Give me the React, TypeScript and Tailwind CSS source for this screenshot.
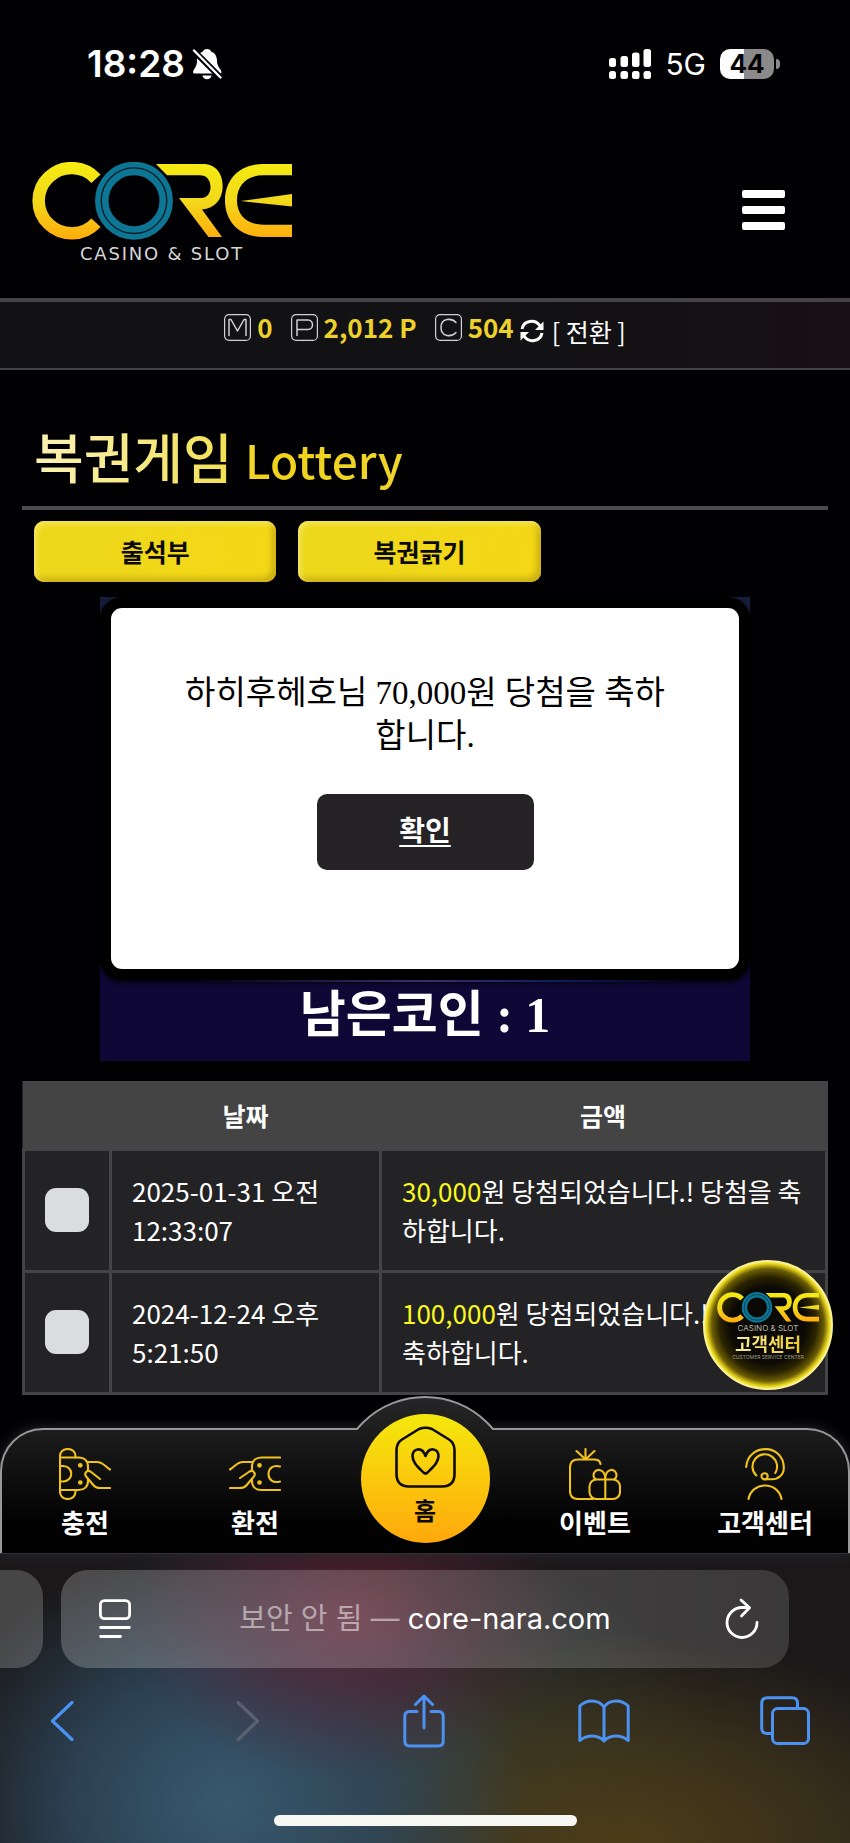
import React, { useState } from 'react';

interface LotteryRow {
  id: string;
  date: string;
  amount: string;
  message: string;
}

const rows: LotteryRow[] = [
  { id: '1', date: '2025-01-31 오전 12:33:07', amount: '30,000', message: '원 당첨되었습니다.! 당첨을 축하합니다.' },
  { id: '2', date: '2024-12-24 오후 5:21:50', amount: '100,000', message: '원 당첨되었습니다.! 당첨을 축하합니다.' },
];

const CoreLogo = ({ id, className }: { id: string; className: string }) => (
  <svg viewBox="0 0 260 78" className={className} aria-label="CORE" role="img">
    <defs>
      <linearGradient id={id} gradientUnits="userSpaceOnUse" x1="0" y1="0" x2="0" y2="78">
        <stop offset="0" stopColor="#f5ec12" />
        <stop offset="0.5" stopColor="#f2d81a" />
        <stop offset="1" stopColor="#ffab0c" />
      </linearGradient>
    </defs>
    <path d="M64 16.7 A33 32.6 0 1 0 64 60.7" fill="none" stroke={`url(#${id})`} strokeWidth="12.5" />
    <g fill={`url(#${id})`}>
      <path d="M124 2 H171 C184 2 190.7 12 190.7 24 C190.7 37 183 46.500 170 47.500 L190 75 H176.500 L147 36 H169 C175.500 36 178.500 31 178.500 25 C178.500 18 174.500 13.300 168 13.300 H135 Z" />
      <path d="M260 2 H231 C208 2 193 17 193 38.500 C193 60 208 75 231 75 H260 V62.700 H231 C215 62.700 205 53 205 38.500 C205 23 215 13.300 231 13.300 H260 Z" />
      <path d="M208.700 39 L260 32 V44.500 Z" />
    </g>
    <circle cx="102" cy="38.700" r="39.500" fill="none" stroke="#000" strokeWidth="3" />
    <circle cx="102" cy="38.700" r="32.200" fill="none" stroke="#0c7694" strokeWidth="13.500" />
    <circle cx="102" cy="38.700" r="32.800" fill="none" stroke="#001a22" strokeWidth="1.300" />
  </svg>
);

const StatusBar = () => (
  <div className="flex h-32 items-center justify-between pl-[87px] pr-[70px] font-['Inter',sans-serif]">
    <div className="flex items-center gap-[7px]">
      <span className="text-[37px] font-semibold leading-10">18:28</span>
      <svg viewBox="0 0 30 32" className="h-8 w-[30px]" fill="#fff">
        <path d="M15 1 C17.500 1 18.500 2 19 3.500 C23.500 5 25 9 25 13 C25 19 29 21 29.500 24 Q29.500 25.500 28 25.500 H2.500 Q1 25.500 1 24 C1.500 21 5 19 5 13 C5 9 6.500 5 11 3.500 C11.500 2 12.500 1 15 1 Z" />
        <path d="M10.500 27.500 H19.500 C19 32.500 11 32.500 10.500 27.500 Z" />
        <path d="M0 1 L30 31" stroke="#000" strokeWidth="6" />
        <path d="M2 2.500 L28.500 29.500" stroke="#fff" strokeWidth="2.400" strokeLinecap="round" />
      </svg>
    </div>
    <div className="flex items-center gap-[14px]">
      <svg viewBox="0 0 42 30" className="h-[30px] w-[42px]" fill="#fff">
        <rect x="0" y="9" width="7" height="9" rx="2.500" />
        <rect x="11.500" y="7" width="7.500" height="11" rx="2.500" />
        <rect x="23" y="3.500" width="7.500" height="14.500" rx="2.500" />
        <rect x="34.500" y="0" width="7.500" height="18" rx="2.500" />
        <rect x="0" y="22" width="7" height="8" rx="2.500" />
        <rect x="11.500" y="22" width="7.500" height="8" rx="2.500" />
        <rect x="23" y="22" width="7.500" height="8" rx="2.500" />
        <rect x="34.500" y="22" width="7.500" height="8" rx="2.500" />
      </svg>
      <span className="text-[30px] leading-9">5G</span>
      <div className="flex items-center gap-0.5">
        <div className="flex h-[30px] w-[54px] items-center justify-center rounded-[10px] bg-[linear-gradient(90deg,#fff_44%,#8a8a8a_44%)] text-[26px] font-bold leading-[30px] text-black">
          44
        </div>
        <div className="h-2.5 w-1 rounded-r-full bg-[#8a8a8a]" />
      </div>
    </div>
  </div>
);

const Badge = ({ children }: { children: React.ReactNode }) => (
  <svg viewBox="0 0 27 27" className="size-[27px]" fill="none" stroke="#d2d2d2" strokeLinecap="round" strokeLinejoin="round">
    <rect x="0.600" y="0.600" width="25.800" height="25.800" rx="4.500" strokeWidth="1.200" />
    {children}
  </svg>
);

const BalanceBar = () => (
  <div className="flex h-[72px] items-center justify-center border-b-2 border-t-4 border-[#434345] bg-[linear-gradient(90deg,#121214,#121113_65%,#171014)] pb-4 text-[26px] font-bold leading-9 text-[#ecd12a]">
    <Badge>
      <path d="M5 21.500 V5.500 H7 L13.500 17 L20 5.500 H22 V21.500" strokeWidth="1.500" />
    </Badge>
    <span className="ml-1.5">0</span>
    <span className="ml-[18px] flex items-center">
      <Badge>
        <path d="M6 21.500 V6 H17 C23 6 23 15.500 17 15.500 H6.500" strokeWidth="1.500" />
      </Badge>
    </span>
    <span className="ml-1.5">2,012 P</span>
    <span className="ml-[18px] flex items-center">
      <Badge>
        <path d="M21 8.500 C17 4 6 3.500 6 13.500 C6 23.500 17 23 21 18.500" strokeWidth="1.500" />
      </Badge>
    </span>
    <span className="ml-1.5">504</span>
    <button type="button" className="ml-1.5 flex items-center gap-2 pt-2 text-[25px] font-normal text-white">
      <svg viewBox="0 0 24 24" className="size-6" fill="none" stroke="#fff" strokeWidth="3">
        <path d="M2 10 C3.500 1.500 15 -0.500 20 7" />
        <path d="M22 14 C20.500 22.500 9 24.500 4 17" />
        <path d="M23.500 2.500 V11 H15 Z" fill="#fff" stroke="none" />
        <path d="M0.500 21.500 V13 H9 Z" fill="#fff" stroke="none" />
      </svg>
      [ 전환 ]
    </button>
  </div>
);

const yellowButton =
  'h-[61px] w-[31%] rounded-[10px] bg-[linear-gradient(100deg,#ecd81c,#f4d716)] pb-0.5 text-[25px] font-bold leading-9 text-[#0c0a04] shadow-[inset_3px_3px_5px_#f3e55c,inset_-4px_-4px_6px_#c9ae12]';

const WinDialog = () => (
  <div role="dialog" aria-label="당첨" className="rounded-[22px] bg-black p-[11px] shadow-[0_2px_5px_#000]">
    <div className="flex h-[361px] flex-col items-center rounded-[11px] bg-white pt-16 text-black">
      <p className="w-[500px] max-w-full break-all text-center font-['Liberation_Serif','Noto_Sans_CJK_KR',serif] text-[33px] leading-[43px]">
        하히후헤호님 70,000원 당첨을 축하합니다.
      </p>
      <button
        type="button"
        className="mt-9 h-[76px] w-[217px] rounded-[10px] bg-[#252326] pb-1.5 text-[28px] font-bold leading-9 text-white underline decoration-2 underline-offset-4"
      >
        확인
      </button>
    </div>
  </div>
);

const FloatingSupport = () => (
  <a
    href="#support"
    className="absolute -right-[5px] bottom-[5px] flex size-[130px] flex-col items-center rounded-full border-2 border-[#f9f09a] bg-[radial-gradient(circle,#0a0905_42%,#2a2300_54%,#6b5c05_63%,#e8d61c_69%,#f7ec4a_71%)] pt-[30px]"
  >
    <CoreLogo id="core-small" className="h-[31px] w-[102px]" />
    <span className="font-['Inter',sans-serif] text-[8px] leading-[10px] text-[#b9b6a8]">CASINO &amp; SLOT</span>
    <span className="bg-[linear-gradient(90deg,#f7ec9b,#f0cc2a)] bg-clip-text text-[18px] font-bold leading-5 text-transparent">고객센터</span>
    <span className="whitespace-nowrap font-['Inter',sans-serif] text-[5px] leading-2 text-[#a19d8d]">CUSTOMER SERVICE CENTER</span>
  </a>
);

const HistoryTable = () => {
  const [checked, setChecked] = useState<Record<string, boolean>>({});

  return (
    <div className="relative mt-5">
      <table className="w-full table-fixed border-collapse border-2 border-[#444446] bg-[#232225] text-[26px] leading-[39px]">
        <colgroup>
          <col className="w-[87px]" />
          <col className="w-[270px]" />
          <col />
        </colgroup>
        <thead>
          <tr className="h-[67px] bg-[#444444]">
            <th aria-label="선택" />
            <th className="font-bold text-[25px]">날짜</th>
            <th className="font-bold text-[25px]">금액</th>
          </tr>
        </thead>
        <tbody>
          {rows.map((row) => (
            <tr key={row.id} className="h-[122px]">
              <td className="border-[3px] border-[#444446]">
                <input
                  type="checkbox"
                  aria-label={row.date}
                  checked={!!checked[row.id]}
                  onChange={(e) => setChecked({ ...checked, [row.id]: e.target.checked })}
                  className="mx-auto block size-11 appearance-none rounded-[11px] bg-[#dadcdf] checked:bg-[#f0d817]"
                />
              </td>
              <td className="border-[3px] border-[#444446] px-5">{row.date}</td>
              <td className="break-all border-[3px] border-[#444446] px-5">
                <span className="text-[#f8f81c]">{row.amount}</span>
                {row.message}
              </td>
            </tr>
          ))}
        </tbody>
      </table>
      <FloatingSupport />
    </div>
  );
};

const NavItem = ({ label, children }: { label: string; children: React.ReactNode }) => (
  <a href="#nav" className="flex flex-col items-center pt-[52px] text-[26px] font-bold leading-[44px]">
    <svg viewBox="0 0 52 52" className="size-[52px]" fill="none" stroke="#f2c21c" strokeWidth="2.100" strokeLinecap="round" strokeLinejoin="round">
      {children}
    </svg>
    {label}
  </a>
);

const BottomNav = () => (
  <nav className="relative mt-px h-[157px]">
    {/* rounded panel with the raised arc behind the home button */}
    <div className="absolute inset-x-0 bottom-0 top-8 rounded-t-[43px] border-2 border-b-0 border-[#989898] bg-[linear-gradient(180deg,#1c1c1c,#020202_75%)] shadow-[0_0_14px_#2b2b30]" />
    <div className="absolute left-1/2 top-0 h-[34px] w-[140px] -translate-x-1/2 overflow-hidden">
      <div className="-ml-[19px] size-[178px] rounded-full border-2 border-[#989898] bg-[linear-gradient(180deg,#262628,#1c1c1c_34px)]" />
    </div>
    <div className="relative grid grid-cols-5">
      <NavItem label="충전">
        <path d="M16.500 9.500 V8.500 C16.500 4 13.500 1 8.700 1 C4 1 1 4 1 8.500 V43.500 C1 48 4 51 8.700 51 C13.500 51 16.500 48 16.500 43.500 V42" />
        <path d="M1 9.500 H19.500 C25.500 9.500 29 13 29 18.500 V23 M29 31 V33 C29 38.500 25.500 42 19.500 42 H1" />
        <path d="M1 18 H4 C15 18 15 33.500 4 33.500 H1" />
        <path d="M28 14 H38 C44 14 45.500 18 51 21.500" />
        <path d="M41 31 L31.500 23.500 C27.500 21.500 24.500 26 27.500 29 L33 35.500 C36 39.500 38 40 42 40 H51" />
        <circle cx="21.300" cy="17.300" r="1.300" fill="#f2c21c" />
        <circle cx="21.300" cy="34.500" r="1.300" fill="#f2c21c" />
      </NavItem>
      <NavItem label="환전">
        <path d="M51 9.500 H32.500 C26.500 9.500 23 13 23 18.500 V23 M23 31 V33 C23 38.500 26.500 42 32.500 42 H51" />
        <path d="M51 18.500 C44 16.500 39.500 20.500 39.500 26 C39.500 31.500 44 35.500 51 33.500" />
        <path d="M24 14 H14 C8 14 6.500 18 1 21.500" />
        <path d="M11 30 L20.500 23.500 C24.500 21.500 27.500 26 24.500 29 L19 35.500 C16 39.500 14 40 10 40 H1" />
        <circle cx="30.500" cy="17.300" r="1.300" fill="#f2c21c" />
        <circle cx="30.500" cy="34.500" r="1.300" fill="#f2c21c" />
      </NavItem>
      <a href="#home" className="mx-auto mt-[18px] flex size-[129px] flex-col items-center rounded-full bg-[linear-gradient(180deg,#f3e80d,#fbc90c_50%,#ffa80c)] pt-3 text-[24px] font-bold leading-[43px] text-[#0d0a02]">
        <svg viewBox="0 0 61 62" className="h-[62px] w-[61px] shrink-0" fill="none" stroke="#0d0a02" strokeWidth="2.600" strokeLinejoin="round">
          <path d="M24 3 Q30.500 0.500 37 3 L54 13.500 Q59.500 17 59.500 24 V48 Q59.500 60.500 47 60.500 H14 Q1.500 60.500 1.500 48 V24 Q1.500 17 7 13.500 Z" />
          <path d="M30.500 30 C27 20 17.500 22.500 17.500 30 C17.500 36.500 23 41 28.500 46.500 Q30.500 48.500 32.500 46.500 C38 41 43.500 36.500 43.500 30 C43.500 22.500 34 20 30.500 30 Z" />
        </svg>
        홈
      </a>
      <NavItem label="이벤트">
        <path d="M31.500 16 C31 12.500 28.500 11.500 25 11.500 H9 Q1 11.500 1 19.500 V43 Q1 51 9 51 H24" />
        <path d="M16.500 10.500 V1 M15.500 10.500 L7.500 3 M17.500 10.500 L25.500 3" />
        <rect x="20.500" y="31.500" width="30.500" height="19.500" rx="7" />
        <path d="M36.300 31.500 V51 M36.300 31 C36 19 24.500 20 24.500 27.500 Q24.500 30 26.500 31 M36.300 31 C36.500 19 47.500 20 47.500 27.500 Q47.500 30 45.500 31" />
      </NavItem>
      <NavItem label="고객센터">
        <path d="M7.200 19 C9 -5 44.800 -5 44.800 20 C44.800 27 39 31.300 33 31.300 H26" />
        <path d="M17.300 27.500 A12.300 12.300 0 1 1 36.300 25" />
        <circle cx="25.600" cy="28.300" r="3.100" />
        <path d="M9.500 51 C13 33 39 33 42.500 51" />
      </NavItem>
    </div>
  </nav>
);

const BrowserBar = () => (
  <footer className="border-t border-[#3a3a3a] bg-[#1a1819] bg-[radial-gradient(ellipse_220px_160px_at_350px_65px,#6b2438c8,#5a203280_45%,transparent),radial-gradient(ellipse_300px_260px_at_225px_250px,#38586e,#30495ed8_50%,transparent),radial-gradient(ellipse_400px_210px_at_620px_290px,#4c3d18,#43371bc0_50%,transparent),radial-gradient(ellipse_300px_220px_at_430px_220px,#35504ab0,transparent)] pt-4 font-['Inter','Noto_Sans_CJK_KR',sans-serif]">
    <div className="flex h-[98px] gap-[18px] pr-[61px]">
      <div className="w-[43px] rounded-r-[27px] bg-white/20" />
      <div className="flex flex-1 items-center justify-between rounded-[27px] bg-[linear-gradient(90deg,#ffffff38,#ffffff24)] pl-[38px] pr-[30px]">
        <button type="button" aria-label="페이지 메뉴">
          <svg viewBox="0 0 32 40" className="h-10 w-8" fill="none" stroke="#fff" strokeWidth="2.800" strokeLinecap="round">
            <rect x="1.400" y="1.600" width="29.200" height="18" rx="4" />
            <path d="M1.600 28.500 H30.400 M1.600 37.500 H21.500" />
          </svg>
        </button>
        <button type="button" className="pr-1.5 text-[29px] leading-10 text-white">
          <span className="text-white/50">보안 안 됨 — </span>core-nara.com
        </button>
        <button type="button" aria-label="새로고침">
          <svg viewBox="0 0 34 42" className="h-[42px] w-[34px]" fill="none" stroke="#fff" strokeWidth="2.800" strokeLinecap="round" strokeLinejoin="round">
            <path d="M24 9.500 H17 A15 15 0 1 0 32 24.500" />
            <path d="M16 2 L24.500 9.800 L16.500 18" />
          </svg>
        </button>
      </div>
    </div>
    <div className="mt-[25px] flex h-14 items-center justify-between pl-[37px] pr-10 text-[#4b92f2]">
      <button type="button" aria-label="뒤로" className="flex w-[50px] justify-center">
        <svg viewBox="0 0 24 42" className="h-[42px] w-6" fill="none" stroke="currentColor" strokeWidth="3.200" strokeLinecap="round" strokeLinejoin="round">
          <path d="M22 2.500 L2.500 21 L22 39.500" />
        </svg>
      </button>
      <button type="button" aria-label="앞으로" className="flex w-[50px] justify-end pr-2 text-[#5a6170]">
        <svg viewBox="0 0 24 42" className="h-[42px] w-6" fill="none" stroke="currentColor" strokeWidth="3.200" strokeLinecap="round" strokeLinejoin="round">
          <path d="M2 2.500 L21.500 21 L2 39.500" />
        </svg>
      </button>
      <button type="button" aria-label="공유" className="flex w-[50px] justify-center">
        <svg viewBox="0 0 42 54" className="h-[54px] w-[42px]" fill="none" stroke="currentColor" strokeWidth="3" strokeLinecap="round" strokeLinejoin="round">
          <path d="M14 17.500 H6.500 Q1.800 17.500 1.800 22.500 V47 Q1.800 52 6.500 52 H35.500 Q40.200 52 40.200 47 V22.500 Q40.200 17.500 35.500 17.500 H28" />
          <path d="M21 34 V2.500 M12.500 10.500 L21 2 L29.500 10.500" />
        </svg>
      </button>
      <button type="button" aria-label="책갈피" className="flex w-[50px] justify-center">
        <svg viewBox="0 0 52 44" className="h-11 w-[52px] shrink-0" fill="none" stroke="currentColor" strokeWidth="3" strokeLinecap="round" strokeLinejoin="round">
          <path d="M26 8 C20 -0.500 8 0.500 1.800 7 V41.500 C9 35.500 20 35.500 26 42 C32 35.500 43 35.500 50.200 41.500 V7 C44 0.500 32 -0.500 26 8 Z M26 8 V42" />
        </svg>
      </button>
      <button type="button" aria-label="탭" className="flex w-[50px] justify-center">
        <svg viewBox="0 0 50 49" className="h-[49px] w-[50px]" fill="none" stroke="currentColor" strokeWidth="3" strokeLinecap="round" strokeLinejoin="round">
          <path d="M12 37.500 H7 Q1.700 37.500 1.700 32 V7.500 Q1.700 1.700 7.500 1.700 H32 Q37.500 1.700 37.500 7 V12" />
          <rect x="12.500" y="12.500" width="36" height="35" rx="5" />
        </svg>
      </button>
    </div>
    <div className="flex justify-center pb-[18px] pt-[66px]">
      <div className="h-[11px] w-[303px] rounded-full bg-[#f6f6f2]" />
    </div>
  </footer>
);

export default function App() {
  return (
    <div className="bg-[#010103] font-['Noto_Sans_CJK_KR',sans-serif] text-white">
      <StatusBar />
      <header className="flex h-[170px] items-start justify-between pl-8 pr-[65px] pt-[34px]">
        <a href="#home" className="flex flex-col items-center">
          <CoreLogo id="core-main" className="h-[78px] w-[260px]" />
          <span className="mt-0.5 font-['DejaVu_Sans',sans-serif] text-[18px] leading-6 tracking-widest text-[#d6d6d6]">CASINO &amp; SLOT</span>
        </a>
        <button type="button" aria-label="메뉴" className="mt-7 flex flex-col gap-2">
          <span className="h-2 w-[43px] rounded-xs bg-white" />
          <span className="h-2 w-[43px] rounded-xs bg-white" />
          <span className="h-2 w-[43px] rounded-xs bg-white" />
        </button>
      </header>
      <BalanceBar />
      <main className="px-[22px] pt-12">
        <div className="border-b-4 border-[#4b4b4d] px-3 pb-3.5">
          <h1 className="h-[74px] w-fit bg-[linear-gradient(90deg,#fbf2b4,#f3e25c_50%,#f0d21a_62%,#efd52a)] bg-clip-text text-[54px] font-medium leading-[76px] text-transparent">
            복권게임 <span className="text-[46px] leading-none">Lottery</span>
          </h1>
        </div>
        <div className="mt-[11px] flex gap-[22px] px-3">
          <button type="button" className={yellowButton}>출석부</button>
          <button type="button" className={yellowButton}>복권긁기</button>
        </div>
        <section className="mx-auto mt-[15px] max-w-[650px] bg-[linear-gradient(180deg,#171d3c,#0f0735_60%)]">
          <WinDialog />
          <div className="h-0.5 bg-[linear-gradient(90deg,transparent_15%,#3a2f68_50%,#101c60_70%,transparent_90%)]" />
          <p className="h-[79px] text-center font-['Liberation_Serif','Noto_Sans_CJK_KR',serif] text-[50px] font-bold leading-[66px]">
            남은코인 : 1
          </p>
        </section>
        <HistoryTable />
      </main>
      <BottomNav />
      <BrowserBar />
    </div>
  );
}
